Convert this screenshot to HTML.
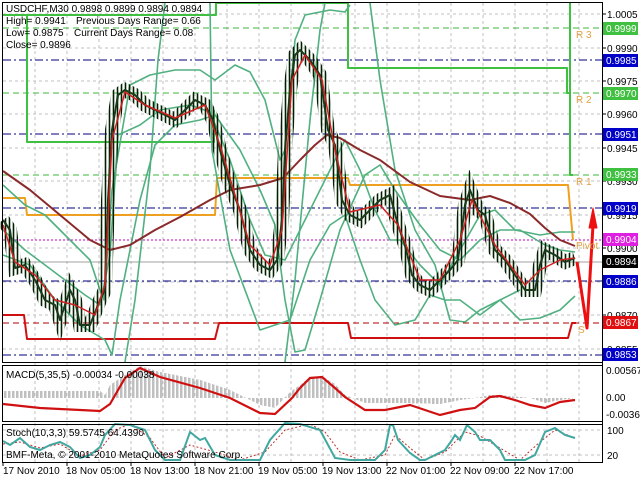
<!DOCTYPE html>
<html><head><meta charset="utf-8"><style>
body{margin:0;background:#fff;width:640px;height:480px;overflow:hidden;font-family:"Liberation Sans",sans-serif}
svg text{font-family:"Liberation Sans",sans-serif;font-size:10px}
</style></head><body>
<svg width="640" height="480" xmlns="http://www.w3.org/2000/svg" shape-rendering="crispEdges">
<defs>
<pattern id="hb" width="4" height="4" patternUnits="userSpaceOnUse"><rect width="2.5" height="4" fill="#c0c0c0"/></pattern>
<pattern id="cd" width="4" height="4" patternUnits="userSpaceOnUse"><rect x="1" width="1" height="4" fill="#000"/><rect x="0" width="3" height="4" fill="#1a4a1a" opacity="0.35"/></pattern>
</defs>
<rect width="640" height="480" fill="#fff"/>
<g stroke="#c0c0c0" stroke-dasharray="3,3">
<line x1="35" y1="3" x2="35" y2="462"/><line x1="67" y1="3" x2="67" y2="462"/><line x1="99" y1="3" x2="99" y2="462"/><line x1="131" y1="3" x2="131" y2="462"/><line x1="163" y1="3" x2="163" y2="462"/><line x1="195" y1="3" x2="195" y2="462"/><line x1="227" y1="3" x2="227" y2="462"/><line x1="259" y1="3" x2="259" y2="462"/><line x1="291" y1="3" x2="291" y2="462"/><line x1="323" y1="3" x2="323" y2="462"/><line x1="355" y1="3" x2="355" y2="462"/><line x1="387" y1="3" x2="387" y2="462"/><line x1="419" y1="3" x2="419" y2="462"/><line x1="451" y1="3" x2="451" y2="462"/><line x1="483" y1="3" x2="483" y2="462"/><line x1="515" y1="3" x2="515" y2="462"/><line x1="547" y1="3" x2="547" y2="462"/><line x1="579" y1="3" x2="579" y2="462"/>
<line x1="3" y1="14" x2="602" y2="14"/><line x1="3" y1="48" x2="602" y2="48"/><line x1="3" y1="81" x2="602" y2="81"/><line x1="3" y1="114" x2="602" y2="114"/><line x1="3" y1="148" x2="602" y2="148"/><line x1="3" y1="181" x2="602" y2="181"/><line x1="3" y1="215" x2="602" y2="215"/><line x1="3" y1="248" x2="602" y2="248"/><line x1="3" y1="282" x2="602" y2="282"/><line x1="3" y1="315" x2="602" y2="315"/><line x1="3" y1="349" x2="602" y2="349"/>
<line x1="3" y1="430" x2="602" y2="430"/><line x1="3" y1="455" x2="602" y2="455"/>
</g>
<g fill="none">
<line x1="3" y1="28" x2="602" y2="28" stroke="#3cb83c" stroke-dasharray="6,4"/>
<line x1="3" y1="93" x2="602" y2="93" stroke="#3cb83c" stroke-dasharray="6,4"/>
<line x1="3" y1="175" x2="602" y2="175" stroke="#3cb83c" stroke-dasharray="6,4"/>
<g stroke="#000080" stroke-dasharray="8,3,2,3"><line x1="3" y1="60" x2="602" y2="60"/><line x1="3" y1="134" x2="602" y2="134"/><line x1="3" y1="208" x2="602" y2="208"/><line x1="3" y1="281" x2="602" y2="281"/><line x1="3" y1="355" x2="602" y2="355"/></g>
<line x1="3" y1="240" x2="602" y2="240" stroke="#c000c0" stroke-dasharray="2,2"/>
<line x1="3" y1="323" x2="602" y2="323" stroke="#b00000" stroke-dasharray="6,4"/>
<line x1="3" y1="262" x2="602" y2="262" stroke="#a0a0a0"/>
</g>
<g fill="none" stroke-linejoin="round" shape-rendering="auto">
<polyline points="3,15 216,15 216,3 348,3 348,68 567,68 567,93 570,93" stroke="#40c040" stroke-width="2"/>
<polyline points="27,15 27,142 214,142 214,110" stroke="#40c040" stroke-width="2"/>
<polyline points="570,3 570,175 573,175" stroke="#40c040" stroke-width="2"/>
<polyline points="3,198 25,198 27,215 215,215 217,178 348,178 350,185 568,185 573,240" stroke="#f0a020" stroke-width="2"/>
<polyline points="3,315 24,315 27,339 215,339 219,323 348,323 351,338 568,338 572,323 576,323" stroke="#d01010" stroke-width="2"/>
<g stroke="#50b080" stroke-width="1.6">
<polyline points="3,185 25,205 45,215 70,240 90,260 100,290 104,300 112,190 130,85 150,75 175,70 200,70 215,80 235,65 250,72 265,100 280,160 285,150 295,40 305,15 330,10 345,12 350,5"/>
<polyline points="3,230 25,250 45,265 65,280 85,295 100,305 110,255 118,135 140,125 160,110 190,105 210,112 230,160 250,220 265,255 285,260 300,230 330,170 345,140 360,170 375,210 390,240 400,240 420,265 440,285 460,250 480,215 495,210 515,230 540,235 560,232 575,232"/>
<polyline points="3,255 30,265 55,300 80,325 105,340 112,355 120,300 140,200 155,145 175,125 200,120 215,115 240,150 260,190 275,225 285,300 295,352 305,350 320,300 340,230 365,175 380,165 395,190 420,225 440,250 460,260 480,240 500,230 520,230 545,245 560,250 575,252"/>
<polyline points="125,362 135,300 150,170 158,60 165,3"/>
<polyline points="285,362 295,280 310,120 320,30 325,3"/>
<polyline points="370,3 380,80 395,170 415,230 435,265 450,320 465,322 480,310 500,300 520,320 540,318 560,310 575,296"/>
<polyline points="210,3 212,150 230,250 260,330 290,320 310,260 330,225 345,215 360,260 375,300 395,325 415,320 430,295 445,300 460,300 480,315 500,300 520,290"/>
</g>
<polyline points="3,171 30,190 60,215 90,240 110,250 130,245 155,230 180,217 210,200 230,190 260,185 283,178 300,160 315,145 327,135 340,138 360,150 380,160 410,182 440,196 470,200 490,196 510,203 530,214 545,228 560,240 575,246" stroke="#8b2a2a" stroke-width="2"/>
<polyline points="3,220 10,230 15,268 25,265 35,280 45,300 55,305 60,320 70,290 75,300 80,325 90,325 100,300 105,290 108,200 112,130 118,95 125,90 135,95 145,105 155,110 165,115 175,120 185,110 195,100 205,105 213,120 220,150 230,185 240,210 250,250 260,265 270,270 277,260 282,220 285,150 290,90 295,55 300,50 310,60 320,75 328,130 335,145 342,200 350,215 360,220 370,210 380,200 390,195 398,225 405,245 412,275 420,285 430,290 440,280 450,270 458,260 465,205 470,190 478,210 485,215 495,250 505,260 515,275 525,290 535,290 540,265 545,250 555,255 565,262 575,258" stroke="url(#cd)" stroke-width="14" stroke-linejoin="miter"/>
<polyline points="3,220 10,230 15,268 25,265 35,280 45,300 55,305 60,320 70,290 75,300 80,325 90,325 100,300 105,290 108,200 112,130 118,95 125,90 135,95 145,105 155,110 165,115 175,120 185,110 195,100 205,105 213,120 220,150 230,185 240,210 250,250 260,265 270,270 277,260 282,220 285,150 290,90 295,55 300,50 310,60 320,75 328,130 335,145 342,200 350,215 360,220 370,210 380,200 390,195 398,225 405,245 412,275 420,285 430,290 440,280 450,270 458,260 465,205 470,190 478,210 485,215 495,250 505,260 515,275 525,290 535,290 540,265 545,250 555,255 565,262 575,258" stroke="#1a3a1a" stroke-width="2"/>
<polyline points="3,225 15,262 35,275 55,300 75,305 95,315 105,285 112,140 125,92 145,105 175,118 205,105 220,145 250,245 270,265 282,230 292,80 305,55 322,80 335,150 350,212 380,205 398,225 420,280 440,280 460,240 472,200 495,245 525,285 540,270 560,260 575,258" stroke="#d02020" stroke-width="1.5"/>
<polyline points="577,262 587,328 593,225" stroke="#ee1010" stroke-width="3"/>
<polygon points="589,228 593,208 597,228" fill="#ee1010" stroke="#ee1010"/>
</g>
<path d="M3,391 L100,391 L105,395 L110,385 L125,375 L140,366 L160,372 L200,380 L230,390 L240,395 L260,405 L275,408 L290,392 L300,385 L310,377 L322,376 L335,384 L345,395 L365,403 L400,403 L440,404 L460,400 L475,398 L490,395 L500,395 L530,398 L545,403 L560,400 L575,398 L575,398 L3,398Z" fill="url(#hb)"/>
<polyline fill="none" stroke="#d01010" stroke-width="2.2" shape-rendering="auto" points="3,404 40,408 100,411 110,404 125,378 140,368 160,377 200,388 230,398 260,413 275,414 292,398 300,388 310,378 322,377 335,388 345,397 365,410 385,410 400,407 410,405 425,410 440,415 460,410 475,408 490,397 500,396 515,400 530,405 545,408 560,402 575,400"/>
<polyline fill="none" stroke="#c03030" stroke-dasharray="2,2" shape-rendering="auto" points="3,444 20,442 40,448 60,444 80,456 100,450 115,430 130,424 150,438 165,458 190,445 215,452 240,460 265,452 285,430 310,424 325,432 340,452 360,460 385,455 395,435 410,448 425,460 445,452 465,432 480,436 500,448 520,460 540,442 555,430 575,438"/>
<polyline fill="none" stroke="#40a8a0" stroke-width="2" shape-rendering="auto" points="3,441 10,445 20,438 30,447 40,450 50,445 60,442 70,447 80,458 90,455 100,447 105,435 115,424 130,425 145,430 155,450 165,460 180,460 190,432 200,440 205,438 215,455 230,460 260,460 270,440 285,423 300,424 320,430 335,458 350,460 375,460 385,450 390,425 393,425 398,440 410,453 420,460 425,460 435,455 445,450 452,440 455,435 460,440 467,425 475,432 480,440 490,440 500,450 505,460 525,460 535,455 545,432 555,428 565,435 575,438"/>
<g fill="none" stroke="#000">
<rect x="2.5" y="2.5" width="600" height="360"/>
<rect x="2.5" y="365.5" width="600" height="56"/>
<rect x="2.5" y="424.5" width="600" height="38"/>
<line x1="602.5" y1="2" x2="602.5" y2="463"/>
</g>
<g stroke="#000"><line x1="603" y1="14" x2="606" y2="14"/><line x1="603" y1="48" x2="606" y2="48"/><line x1="603" y1="81" x2="606" y2="81"/><line x1="603" y1="114" x2="606" y2="114"/><line x1="603" y1="148" x2="606" y2="148"/><line x1="603" y1="181" x2="606" y2="181"/><line x1="603" y1="215" x2="606" y2="215"/><line x1="603" y1="248" x2="606" y2="248"/><line x1="603" y1="315" x2="606" y2="315"/><line x1="603" y1="349" x2="606" y2="349"/></g>
<g fill="#000">
<text x="607" y="18">1.0005</text><text x="607" y="52">0.9990</text><text x="607" y="85">0.9975</text><text x="607" y="118">0.9960</text><text x="607" y="152">0.9945</text><text x="607" y="185">0.9930</text><text x="607" y="219">0.9915</text><text x="607" y="252">0.9900</text><text x="607" y="319">0.9870</text><text x="607" y="353">0.9855</text>
</g>
<rect x="603" y="22" width="35" height="13" fill="#40c040"/><text x="606" y="32" fill="#fff">0.9999</text>
<rect x="603" y="54" width="35" height="13" fill="#0000c8"/><text x="606" y="64" fill="#fff">0.9985</text>
<rect x="603" y="87" width="35" height="13" fill="#40c040"/><text x="606" y="97" fill="#fff">0.9970</text>
<rect x="603" y="128" width="35" height="13" fill="#0000c8"/><text x="606" y="138" fill="#fff">0.9951</text>
<rect x="603" y="168" width="35" height="13" fill="#40c040"/><text x="606" y="178" fill="#fff">0.9933</text>
<rect x="603" y="202" width="35" height="13" fill="#0000c8"/><text x="606" y="212" fill="#fff">0.9919</text>
<rect x="603" y="233" width="35" height="13" fill="#e020e0"/><text x="606" y="243" fill="#fff">0.9904</text>
<rect x="603" y="255" width="35" height="13" fill="#000"/><text x="606" y="265" fill="#fff">0.9894</text>
<rect x="603" y="275" width="35" height="13" fill="#0000c8"/><text x="606" y="285" fill="#fff">0.9886</text>
<rect x="603" y="316" width="35" height="13" fill="#e01010"/><text x="606" y="326" fill="#fff">0.9867</text>
<rect x="603" y="348" width="35" height="13" fill="#0000c8"/><text x="606" y="358" fill="#fff">0.9853</text>
<g fill="#e0a040"><text x="576" y="38">R 3</text><text x="576" y="103">R 2</text><text x="576" y="185">R 1</text><text x="576" y="249">Pivot</text><text x="578" y="333">S</text></g>
<g fill="#000">
<text x="606" y="374">0.00567</text><text x="606" y="401">0.00</text><text x="606" y="418">-0.00362</text>
<text x="607" y="434">100</text><text x="607" y="459">20</text>
<text x="6" y="12">USDCHF,M30  0.9898 0.9899 0.9894 0.9894</text>
<text x="6" y="24">High= 0.9941</text><text x="76" y="24">Previous Days Range= 0.66</text>
<text x="6" y="36">Low= 0.9875</text><text x="74" y="36">Current Days Range= 0.08</text>
<text x="6" y="48">Close= 0.9896</text>
<text x="6" y="378">MACD(5,35,5) -0.00034 -0.00038</text>
<text x="6" y="436">Stoch(10,3,3) 59.5745 64.4390</text>
<text x="6" y="458">BMF-Meta, © 2001-2010 MetaQuotes Software Corp.</text>
<text x="3" y="474">17 Nov 2010</text><text x="66" y="474">18 Nov 05:00</text><text x="130" y="474">18 Nov 13:00</text><text x="194" y="474">18 Nov 21:00</text><text x="258" y="474">19 Nov 05:00</text><text x="322" y="474">19 Nov 13:00</text><text x="386" y="474">22 Nov 01:00</text><text x="450" y="474">22 Nov 09:00</text><text x="514" y="474">22 Nov 17:00</text>
</g>
<g stroke="#000"><line x1="3" y1="463" x2="3" y2="466"/><line x1="67" y1="463" x2="67" y2="466"/><line x1="131" y1="463" x2="131" y2="466"/><line x1="195" y1="463" x2="195" y2="466"/><line x1="259" y1="463" x2="259" y2="466"/><line x1="323" y1="463" x2="323" y2="466"/><line x1="387" y1="463" x2="387" y2="466"/><line x1="451" y1="463" x2="451" y2="466"/><line x1="515" y1="463" x2="515" y2="466"/></g>
</svg>
</body></html>
